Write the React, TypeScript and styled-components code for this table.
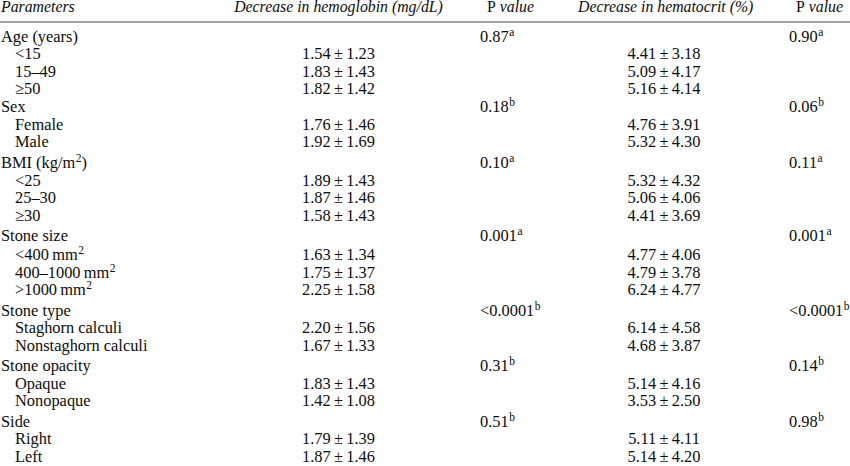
import React from "react";
import styled, { createGlobalStyle } from "styled-components";

const Global = createGlobalStyle`
  html, body { margin: 0; padding: 0; background: #ffffff; }
  body {
    font-family: "Liberation Serif", "Times New Roman", serif;
    color: #0d0d0d;
    width: 850px;
    overflow: hidden;
  }
`;

const COLS = "234px 209px 135px 172px 100px";

const Table = styled.div`
  width: 850px;
  display: flex;
  flex-direction: column;
`;

const HeaderRow = styled.div`
  display: grid;
  grid-template-columns: ${COLS};
  height: 21px;
  font-size: 15.8px;
  line-height: 14px;
  border-bottom: 2px solid #a3a3a3;
`;

const HeadCell = styled.div<{ $align?: "left" | "center"; $pad?: number }>`
  font-style: italic;
  text-align: ${(p) => p.$align ?? "left"};
  padding-left: ${(p) => p.$pad ?? 0}px;
  white-space: nowrap;
`;

const Upright = styled.span`
  font-style: normal;
`;

const Body = styled.div`
  display: flex;
  flex-direction: column;
  padding-top: 4.7px;
`;

const Row = styled.div<{ $extra?: number }>`
  display: grid;
  grid-template-columns: ${COLS};
  height: 17.5px;
  font-size: 16.4px;
  line-height: 17.5px;
  margin-top: ${(p) => p.$extra ?? 0}px;
  white-space: nowrap;
`;

const Label = styled.div<{ $indent?: boolean }>`
  padding-left: ${(p) => (p.$indent ? 15 : 1)}px;
`;

const Value = styled.div`
  text-align: center;
`;

const PCell = styled.div<{ $pad: number }>`
  padding-left: ${(p) => p.$pad}px;
`;

const Sup = styled.sup`
  font-size: 11.5px;
  line-height: 0;
  vertical-align: 6px;
  margin-left: 0.5px;
`;

const Empty = styled.div``;

type Sub = { label: React.ReactNode; hb: string; hct: string; extra?: number };
type Group = {
  name: React.ReactNode;
  p1: [string, string];
  p2: [string, string];
  extra: number;
  rows: Sub[];
};

const T = "\u2009";
const pm = (a: string, b: string) => `${a}${T}±${T}${b}`;
const mm = (pre: string) => (
  <>
    {pre}
    {T}mm<Sup>2</Sup>
  </>
);

const groups: Group[] = [
  {
    name: "Age (years)",
    p1: ["0.87", "a"],
    p2: ["0.90", "a"],
    extra: 0,
    rows: [
      { label: "<15", hb: pm("1.54", "1.23"), hct: pm("4.41", "3.18") },
      { label: "15–49", hb: pm("1.83", "1.43"), hct: pm("5.09", "4.17") },
      { label: "≥50", hb: pm("1.82", "1.42"), hct: pm("5.16", "4.14") },
    ],
  },
  {
    name: "Sex",
    p1: ["0.18", "b"],
    p2: ["0.06", "b"],
    extra: 0.5,
    rows: [
      { label: "Female", hb: pm("1.76", "1.46"), hct: pm("4.76", "3.91") },
      { label: "Male", hb: pm("1.92", "1.69"), hct: pm("5.32", "4.30") },
    ],
  },
  {
    name: (
      <>
        BMI (kg/m<Sup>2</Sup>)
      </>
    ),
    p1: ["0.10", "a"],
    p2: ["0.11", "a"],
    extra: 3.5,
    rows: [
      { label: "<25", hb: pm("1.89", "1.43"), hct: pm("5.32", "4.32") },
      { label: "25–30", hb: pm("1.87", "1.46"), hct: pm("5.06", "4.06") },
      { label: "≥30", hb: pm("1.58", "1.43"), hct: pm("4.41", "3.69") },
    ],
  },
  {
    name: "Stone size",
    p1: ["0.001", "a"],
    p2: ["0.001", "a"],
    extra: 3,
    rows: [
      { label: mm("<400"), hb: pm("1.63", "1.34"), hct: pm("4.77", "4.06"), extra: 1.5 },
      { label: mm("400–1000"), hb: pm("1.75", "1.37"), hct: pm("4.79", "3.78") },
      { label: mm(">1000"), hb: pm("2.25", "1.58"), hct: pm("6.24", "4.77") },
    ],
  },
  {
    name: "Stone type",
    p1: ["<0.0001", "b"],
    p2: ["<0.0001", "b"],
    extra: 3,
    rows: [
      { label: "Staghorn calculi", hb: pm("2.20", "1.56"), hct: pm("6.14", "4.58") },
      { label: "Nonstaghorn calculi", hb: pm("1.67", "1.33"), hct: pm("4.68", "3.87") },
    ],
  },
  {
    name: "Stone opacity",
    p1: ["0.31", "b"],
    p2: ["0.14", "b"],
    extra: 3,
    rows: [
      { label: "Opaque", hb: pm("1.83", "1.43"), hct: pm("5.14", "4.16") },
      { label: "Nonopaque", hb: pm("1.42", "1.08"), hct: pm("3.53", "2.50") },
    ],
  },
  {
    name: "Side",
    p1: ["0.51", "b"],
    p2: ["0.98", "b"],
    extra: 3,
    rows: [
      { label: "Right", hb: pm("1.79", "1.39"), hct: pm("5.11", "4.11") },
      { label: "Left", hb: pm("1.87", "1.46"), hct: pm("5.14", "4.20") },
    ],
  },
];

const P1_PAD = 37;
const P2_PAD = 39;

export default function App() {
  return (
    <>
      <Global />
      <Table>
        <HeaderRow>
          <HeadCell $pad={1}>Parameters</HeadCell>
          <HeadCell $align="center">Decrease in hemoglobin (mg/dL)</HeadCell>
          <HeadCell $pad={P1_PAD + 7}>
            <Upright>P</Upright> value
          </HeadCell>
          <HeadCell $align="center">Decrease in hematocrit (%)</HeadCell>
          <HeadCell $pad={P2_PAD + 7}>
            <Upright>P</Upright> value
          </HeadCell>
        </HeaderRow>
        <Body>
          {groups.map((g, gi) => (
            <React.Fragment key={gi}>
              <Row $extra={g.extra}>
                <Label>{g.name}</Label>
                <Empty />
                <PCell $pad={P1_PAD}>
                  {g.p1[0]}
                  <Sup>{g.p1[1]}</Sup>
                </PCell>
                <Empty />
                <PCell $pad={P2_PAD}>
                  {g.p2[0]}
                  <Sup>{g.p2[1]}</Sup>
                </PCell>
              </Row>
              {g.rows.map((r, ri) => (
                <Row key={ri} $extra={r.extra}>
                  <Label $indent>{r.label}</Label>
                  <Value>{r.hb}</Value>
                  <Empty />
                  <Value>{r.hct}</Value>
                  <Empty />
                </Row>
              ))}
            </React.Fragment>
          ))}
        </Body>
      </Table>
    </>
  );
}
